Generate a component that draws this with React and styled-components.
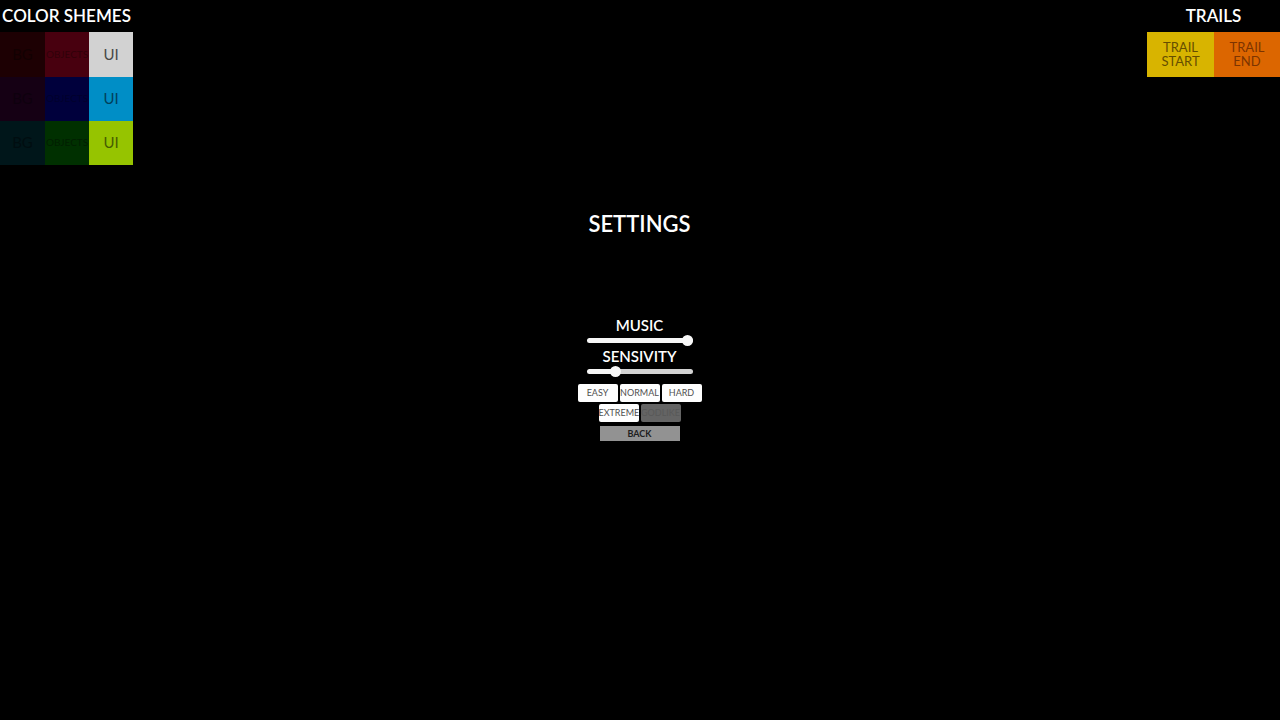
import { useState } from "react"
import styled, { createGlobalStyle } from "styled-components"

const GlobalStyle = createGlobalStyle`
    * {
        box-sizing: border-box;
    }
    body {
        margin: 0;
        background: #000000;
        color: white;
        font-family: Lato, "Liberation Sans", sans-serif;
    }
    button {
        font-family: inherit;
    }
`

const Page = styled.div`
    min-height: 100vh;
    display: grid;
    grid-template-columns: 1fr auto 1fr;
    background: #000000;
`

const Side = styled.section`
    display: flex;
    justify-content: ${props => props.$end ? "flex-end" : "flex-start"};
`

const PanelTitle = styled.h2`
    margin: 0;
    font-size: 17px;
    line-height: 32px;
    font-weight: 600;
    text-align: center;
    white-space: nowrap;
`

const Schemes = styled.div`
    display: grid;
    grid-template-columns: 45px 44px 44px;
    grid-template-rows: 45px 44px 44px;
`

const Swatch = styled.button`
    border: none;
    padding: 0 0 2px;
    background: ${props => props.$bg};
    color: ${props => props.$ink};
    font-size: ${props => props.$small ? "10px" : "15px"};
    line-height: 16px;
    white-space: nowrap;
`

const Trails = styled.div`
    display: grid;
    grid-template-columns: 67px 66px;
    grid-template-rows: 45px;
`

const TrailButton = styled.button`
    border: none;
    padding: 0 10px 2px;
    background: ${props => props.$bg};
    color: ${props => props.$ink};
    font-size: 13px;
    line-height: 14px;
`

const Menu = styled.main`
    display: flex;
    flex-direction: column;
    align-items: center;
    padding: 208px 1px 0 0;
`

const Title = styled.h1`
    margin: 0 0 75px;
    font-size: 22px;
    line-height: 32px;
    font-weight: 600;
`

const Field = styled.div`
    display: flex;
    flex-direction: column;
    align-items: center;
    height: 31px;
`

const Label = styled.label`
    font-size: 15px;
    line-height: 20px;
    font-weight: 600;
`

const Slider = styled.input`
    appearance: none;
    width: 106px;
    height: 11px;
    margin: 0;
    background: transparent;

    &::-webkit-slider-runnable-track {
        height: 5px;
        border-radius: 3px;
        background: linear-gradient(to right, #f6f6f6 ${props => props.$fill}%, #d2d2d2 ${props => props.$fill}%);
    }
    &::-webkit-slider-thumb {
        appearance: none;
        width: 11px;
        height: 11px;
        margin-top: -3px;
        border-radius: 50%;
        background: #f8f8f8;
    }
`

const Levels = styled.div`
    display: flex;
    justify-content: center;
    gap: 2px;
    padding-top: ${props => props.$first ? "7px" : "2px"};
`

const Level = styled.button`
    width: 40px;
    height: 18px;
    border: none;
    border-radius: 2px;
    padding: 0;
    background: #fefefe;
    color: #505050;
    font-size: 9px;
    line-height: 18px;
    white-space: nowrap;

    &:disabled {
        background: #646464;
        color: #585858;
    }
`

const BackButton = styled.button`
    width: 80px;
    height: 15px;
    margin-top: 4px;
    border: none;
    padding: 0;
    background: #929292;
    color: #202020;
    font-size: 9px;
    line-height: 15px;
    font-weight: 700;
`

const schemes = [
  { name: "red", bg: "#1d0003", bgInk: "#120002", objects: "#48000f", objectsInk: "#300009", ui: "#d2d2d2", uiInk: "#484848" },
  { name: "blue", bg: "#150014", bgInk: "#0e000e", objects: "#00003c", objectsInk: "#00002c", ui: "#008ec6", uiInk: "#00405c" },
  { name: "green", bg: "#00161a", bgInk: "#000d10", objects: "#003000", objectsInk: "#001e00", ui: "#96c400", uiInk: "#465c00" },
]

const App = () => {
  const [music, setMusic] = useState(100)
  const [sensivity, setSensivity] = useState(25)

  return (
    <>
      <GlobalStyle />
      <Page>
        <Side>
          <div>
            <PanelTitle>COLOR SHEMES</PanelTitle>
            <Schemes>
              {schemes.map(s => [
                <Swatch key={s.name + "bg"} $bg={s.bg} $ink={s.bgInk}>BG</Swatch>,
                <Swatch key={s.name + "objects"} $bg={s.objects} $ink={s.objectsInk} $small>OBJECTS</Swatch>,
                <Swatch key={s.name + "ui"} $bg={s.ui} $ink={s.uiInk}>UI</Swatch>,
              ])}
            </Schemes>
          </div>
        </Side>

        <Menu>
          <Title>SETTINGS</Title>
          <Field>
            <Label htmlFor="music">MUSIC</Label>
            <Slider id="music" type="range" value={music} $fill={music} onChange={e => setMusic(Number(e.target.value))} />
          </Field>
          <Field>
            <Label htmlFor="sensivity">SENSIVITY</Label>
            <Slider id="sensivity" type="range" value={sensivity} $fill={sensivity} onChange={e => setSensivity(Number(e.target.value))} />
          </Field>
          <Levels $first>
            <Level>EASY</Level>
            <Level>NORMAL</Level>
            <Level>HARD</Level>
          </Levels>
          <Levels>
            <Level>EXTREME</Level>
            <Level disabled>GODLIKE</Level>
          </Levels>
          <BackButton>BACK</BackButton>
        </Menu>

        <Side $end>
          <div>
            <PanelTitle>TRAILS</PanelTitle>
            <Trails>
              <TrailButton $bg="#d8b400" $ink="#664e00">TRAIL START</TrailButton>
              <TrailButton $bg="#dc6600" $ink="#7c3400">TRAIL END</TrailButton>
            </Trails>
          </div>
        </Side>
      </Page>
    </>
  )
}

export default App
